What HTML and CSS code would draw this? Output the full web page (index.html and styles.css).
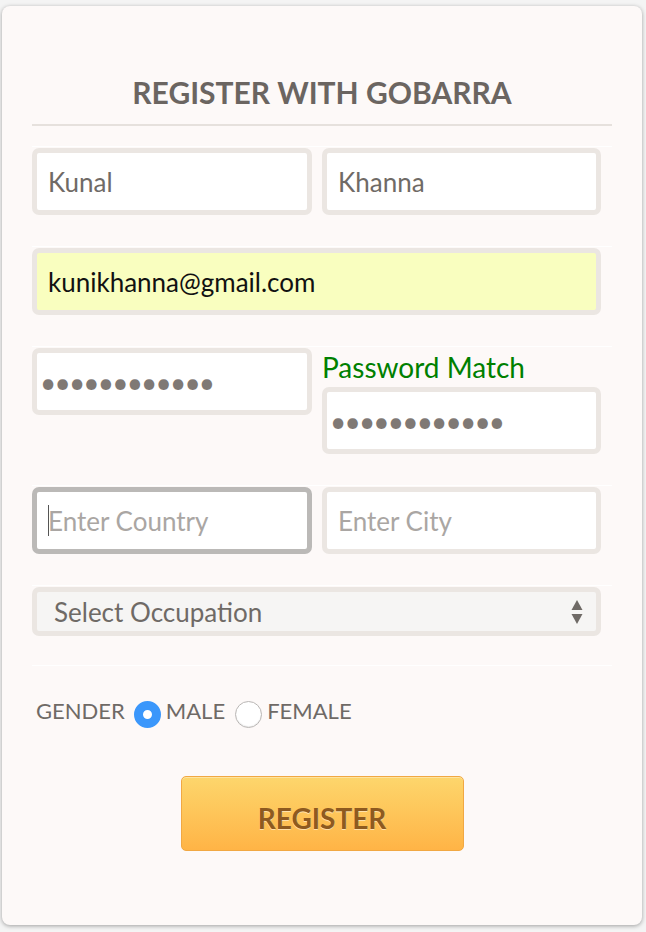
FILE: index.html
```html
<!DOCTYPE html>
<html>
<head>
<meta charset="utf-8">
<link rel="stylesheet" href="styles.css">
</head>
<body>
<div class="card">
  <h1 class="title">REGISTER WITH GOBARRA</h1>
  <form class="form">
    <div class="row two">
      <div class="col"><input class="field" type="text" value="Kunal"></div>
      <div class="col"><input class="field" type="text" value="Khanna"></div>
    </div>
    <div class="row">
      <input class="field field-full autofill" type="text" value="kunikhanna@gmail.com">
    </div>
    <div class="row two">
      <div class="col"><input class="field pw" type="password" value="kunal1234567"></div>
      <div class="col">
        <div class="match">Password Match</div>
        <input class="field pw" type="password" value="kunal1234567">
      </div>
    </div>
    <div class="row two">
      <div class="col caret-wrap"><input class="field focused" type="text" placeholder="Enter Country"><span class="caret"></span></div>
      <div class="col"><input class="field" type="text" placeholder="Enter City"></div>
    </div>
    <div class="row row-select">
      <div class="select-wrap">
        <select class="select">
          <option>Select Occupation</option>
        </select>
        <svg class="select-arrows" width="12" height="26" viewBox="0 0 12 26"><path d="M6 1 L11.5 11 L0.5 11 Z" fill="#6f6a66"/><path d="M0.5 15 L11.5 15 L6 25 Z" fill="#6f6a66"/></svg>
      </div>
    </div>
    <div class="row gender">
      <span class="g-label">GENDER</span>
      <label class="opt"><input class="radio" type="radio" name="g" checked><span>MALE</span></label>
      <label class="opt"><input class="radio" type="radio" name="g"><span>FEMALE</span></label>
    </div>
    <div class="actions">
      <button type="button" class="btn">REGISTER</button>
    </div>
  </form>
</div>
</body>
</html>
```
FILE: styles.css
```css
html, body {
  margin: 0;
  padding: 0;
  background: #f4f4f4;
}
body {
  padding: 6px 4px 7px 2px;
  font-family: Lato, "Open Sans", sans-serif;
}
.card {
  width: 640px;
  height: 919px;
  box-sizing: border-box;
  background: #fdf9f8;
  border-radius: 8px;
  box-shadow: 0 1px 4px rgba(0,0,0,0.35);
  padding: 69px 30px 0 30px;
}
.title {
  margin: 0;
  font-size: 30px;
  line-height: 34px;
  font-weight: 700;
  color: #6b6561;
  text-align: center;
  padding-bottom: 15px;
  border-bottom: 2px solid #e6e1dd;
}
.form {
  margin: 20px 0 0 0;
}
.row {
  border-top: 1px solid #ffffff;
  padding: 1px 0 31px 0;
}
.two {
  display: grid;
  grid-template-columns: 290px 290px;
}
.col {
  position: relative;
}
.field {
  display: block;
  box-sizing: border-box;
  width: 280px;
  height: 67px;
  margin: 0;
  border: 5px solid #ebe6e2;
  border-radius: 7px;
  background: #ffffff;
  padding: 0 0 0 11px;
  font-family: Lato, sans-serif;
  font-size: 26px;
  color: #6f6a66;
  outline: none;
}
.two .col:nth-child(2) .field {
  width: 279px;
}
.field-full {
  width: 569px;
}
.autofill {
  background: #f9febf;
  color: #111111;
}
.pw {
  color: #7f7975;
  font-size: 28px;
  letter-spacing: -1.8px;
  padding-left: 3px;
}
.field::placeholder {
  color: #aaa6a3;
}
.focused {
  border-color: #bbb9b7;
}
.caret {
  position: absolute;
  left: 16px;
  top: 18px;
  width: 1px;
  height: 31px;
  background: #555;
}
.match {
  height: 40px;
  line-height: 40px;
  font-size: 28px;
  color: #008000;
  margin-top: -1px;
}
.row-select {
  padding-bottom: 29px;
}
.select-wrap {
  position: relative;
  width: 569px;
}
.select {
  display: block;
  box-sizing: border-box;
  width: 569px;
  height: 49px;
  margin: 0;
  border: 5px solid #ebe6e2;
  border-radius: 7px;
  background: #f6f5f4;
  -webkit-appearance: none;
  appearance: none;
  padding: 0 0 0 17px;
  font-family: Lato, sans-serif;
  font-size: 26px;
  color: #6f6a66;
  outline: none;
}
.select-arrows {
  position: absolute;
  right: 18px;
  top: 12px;
}
.gender {
  border-top: 1px solid #ffffff;
  display: flex;
  align-items: flex-start;
  padding: 32px 0 0 4px;
  font-size: 22px;
  color: #6f6a66;
  line-height: 26px;
}
.g-label {
  margin-right: 9px;
}
.opt {
  display: flex;
  align-items: flex-start;
  margin-right: 10px;
}
.radio {
  -webkit-appearance: none;
  appearance: none;
  box-sizing: border-box;
  width: 27px;
  height: 27px;
  margin: 3px 5px 0 0;
  border-radius: 50%;
  border: 1px solid #b9b6b4;
  background: #ffffff;
  box-shadow: inset 0 -1px 1px rgba(0,0,0,0.08);
}
.radio:checked {
  border: 9px solid #3b97fb;
  background: #ffffff;
  box-shadow: none;
}
.actions {
  display: flex;
  justify-content: center;
  padding-top: 48px;
}
.btn {
  box-sizing: border-box;
  width: 283px;
  height: 75px;
  border: 1px solid #f1a843;
  border-radius: 5px;
  background: linear-gradient(#fdd66c, #ffb446);
  box-shadow: inset 0 1px 0 rgba(255,255,255,0.35);
  font-family: Lato, sans-serif;
  font-weight: 700;
  font-size: 28px;
  color: #8e5a1f;
  text-shadow: 0 1px 0 rgba(255,255,255,0.5);
  padding: 8px 0 0 0;
  cursor: pointer;
}
```
